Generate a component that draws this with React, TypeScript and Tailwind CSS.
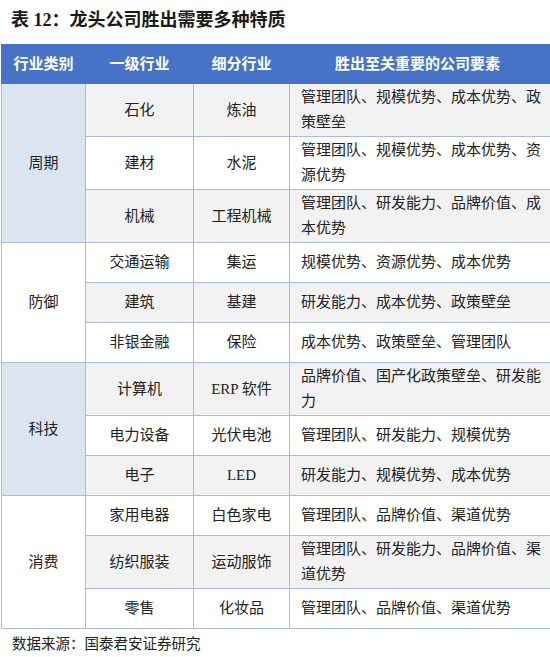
import React from "react";

type Row = { sub: string; seg: string; text: string; tall?: boolean };
type Group = { cat: string; shaded: boolean; rows: Row[] };

const groups: Group[] = [
  {
    cat: "周期",
    shaded: true,
    rows: [
      { sub: "石化", seg: "炼油", text: "管理团队、规模优势、成本优势、政策壁垒", tall: true },
      { sub: "建材", seg: "水泥", text: "管理团队、规模优势、成本优势、资源优势", tall: true },
      { sub: "机械", seg: "工程机械", text: "管理团队、研发能力、品牌价值、成本优势", tall: true },
    ],
  },
  {
    cat: "防御",
    shaded: false,
    rows: [
      { sub: "交通运输", seg: "集运", text: "规模优势、资源优势、成本优势" },
      { sub: "建筑", seg: "基建", text: "研发能力、成本优势、政策壁垒" },
      { sub: "非银金融", seg: "保险", text: "成本优势、政策壁垒、管理团队" },
    ],
  },
  {
    cat: "科技",
    shaded: true,
    rows: [
      { sub: "计算机", seg: "ERP 软件", text: "品牌价值、国产化政策壁垒、研发能力", tall: true },
      { sub: "电力设备", seg: "光伏电池", text: "管理团队、研发能力、规模优势" },
      { sub: "电子", seg: "LED", text: "研发能力、规模优势、成本优势" },
    ],
  },
  {
    cat: "消费",
    shaded: false,
    rows: [
      { sub: "家用电器", seg: "白色家电", text: "管理团队、品牌价值、渠道优势" },
      { sub: "纺织服装", seg: "运动服饰", text: "管理团队、研发能力、品牌价值、渠道优势", tall: true },
      { sub: "零售", seg: "化妆品", text: "管理团队、品牌价值、渠道优势" },
    ],
  },
];

export default function App() {
  let idx = 0;
  return (
    <div
      className="w-[550px] h-[657px] overflow-hidden bg-white text-[#222222]"
      style={{ fontFamily: '"Liberation Serif", "Noto Sans CJK SC", sans-serif' }}
    >
      <div className="h-[44px] flex items-center pl-[11px] pb-[3px] text-[18px] font-bold text-[#1a1a1a]">
        表 12：龙头公司胜出需要多种特质
      </div>
      <table className="ml-[1px] w-[560px] border-collapse table-fixed text-[15px]">
        <colgroup>
          <col className="w-[84px]" />
          <col className="w-[108px]" />
          <col className="w-[96px]" />
          <col className="w-[272px]" />
        </colgroup>
        <thead>
          <tr className="h-[39px] bg-[#4673c5] text-white font-bold">
            <th className="border border-[#4673c5] font-bold">行业类别</th>
            <th className="border border-[#4673c5] font-bold">一级行业</th>
            <th className="border border-[#4673c5] font-bold">细分行业</th>
            <th className="border border-[#4673c5] font-bold text-left pl-[45px]">胜出至关重要的公司要素</th>
          </tr>
        </thead>
        <tbody>
          {groups.map((g) =>
            g.rows.map((r, i) => {
              const gray = idx % 2 === 0;
              idx++;
              const bg = gray ? "bg-[#f2f2f2]" : "bg-white";
              return (
                <tr key={g.cat + i} className={r.tall ? "h-[53px]" : "h-[40px]"}>
                  {i === 0 && (
                    <td
                      rowSpan={3}
                      className={
                        "border border-[#a9bcdd] text-center " +
                        (g.shaded ? "bg-[#dbe5f1]" : "bg-white")
                      }
                    >
                      {g.cat}
                    </td>
                  )}
                  <td className={"border border-[#a9bcdd] text-center " + bg}>{r.sub}</td>
                  <td className={"border border-[#a9bcdd] text-center " + bg}>{r.seg}</td>
                  <td className={"border border-[#a9bcdd] " + bg}>
                    <div className="w-[250px] pl-[11px] box-content leading-[25px]">{r.text}</div>
                  </td>
                </tr>
              );
            })
          )}
        </tbody>
      </table>
      <div className="mt-[4px] pl-[12px] text-[14.5px] leading-[22px] text-[#222222]">
        数据来源：国泰君安证券研究
      </div>
    </div>
  );
}
